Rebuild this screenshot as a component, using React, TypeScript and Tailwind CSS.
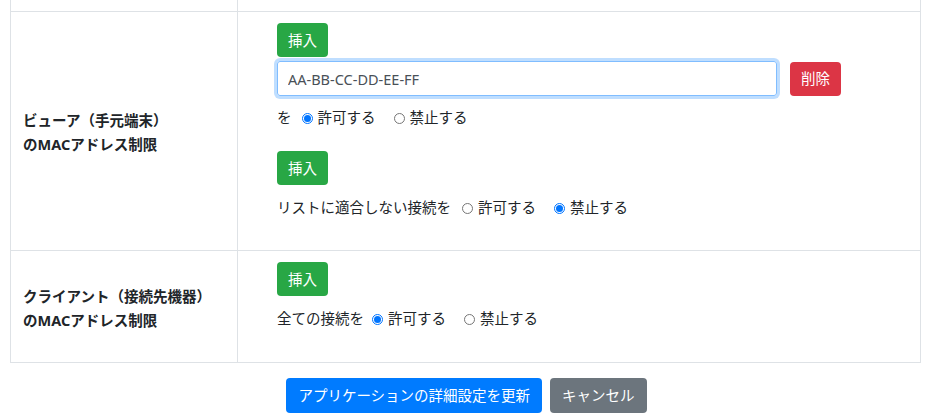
import React from "react";

const font = { fontFamily: '"Noto Sans", "Noto Sans CJK JP", sans-serif' };

const Btn = ({ color, children, big }: { color: string; children: React.ReactNode; big?: boolean }) => (
  <button
    className={`${color} text-white rounded-[4px] leading-none text-[14.5px] ${big ? "h-[35px] px-[12px]" : "h-[34px] px-[11px]"}`}
  >
    {children}
  </button>
);

const Radio = ({ checked, label }: { checked?: boolean; label: string }) => (
  <label className="flex items-center gap-[5px]">
    {checked ? (
      <span className="w-[11px] h-[11px] rounded-full border border-[#0075ff] bg-white flex items-center justify-center">
        <span className="w-[7px] h-[7px] rounded-full bg-[#0075ff]" />
      </span>
    ) : (
      <span className="w-[11px] h-[11px] rounded-full border border-[#767676] bg-white" />
    )}
    <span>{label}</span>
  </label>
);

const App = () => {
  return (
    <div className="w-[927px] h-[416px] bg-white text-[14.5px] text-[#212529] overflow-hidden" style={font}>
      <div className="mx-[10px] w-[911px]">
        <div className="flex h-[11px] border-x border-[#dee2e6]">
          <div className="w-[227px] border-r border-[#dee2e6]" />
        </div>

        {/* viewer row */}
        <div className="flex border border-[#dee2e6] h-[240px]">
          <div className="w-[227px] border-r border-[#dee2e6] flex items-center pl-[12px] pt-[1px] font-bold leading-[24px]">
            <div>
              ビューア（手元端末）
              <br />
              のMACアドレス制限
            </div>
          </div>
          <div className="flex-1 pl-[39px] pt-[11px]">
            <Btn color="bg-[#28a745]">挿入</Btn>
            <div className="flex items-center mt-[4px]">
              <input
                readOnly
                value="AA-BB-CC-DD-EE-FF"
                className="w-[500px] h-[35px] border border-[#80bdff] rounded-[3px] px-[10px] text-[#495057] text-[14.5px] shadow-[0_0_0_3px_rgba(0,123,255,0.25)] outline-none"
                style={font}
              />
              <div className="ml-[13px]">
                <Btn color="bg-[#dc3545]">削除</Btn>
              </div>
            </div>
            <div className="flex items-center mt-[11px] h-[22px]">
              <span className="mr-[10px]">を</span>
              <Radio checked label="許可する" />
              <div className="ml-[18px]">
                <Radio label="禁止する" />
              </div>
            </div>
            <div className="mt-[22px]">
              <Btn color="bg-[#28a745]">挿入</Btn>
            </div>
            <div className="flex items-center mt-[12px] h-[22px]">
              <span className="mr-[11px]">リストに適合しない接続を</span>
              <Radio label="許可する" />
              <div className="ml-[18px]">
                <Radio checked label="禁止する" />
              </div>
            </div>
          </div>
        </div>

        {/* client row */}
        <div className="flex border-x border-b border-[#dee2e6] h-[112px]">
          <div className="w-[227px] border-r border-[#dee2e6] flex items-center pl-[12px] pt-[2px] font-bold leading-[24px]">
            <div>
              クライアント（接続先機器）
              <br />
              のMACアドレス制限
            </div>
          </div>
          <div className="flex-1 pl-[39px] pt-[11px]">
            <Btn color="bg-[#28a745]">挿入</Btn>
            <div className="flex items-center mt-[12px] h-[22px]">
              <span className="mr-[8px]">全ての接続を</span>
              <Radio checked label="許可する" />
              <div className="ml-[18px]">
                <Radio label="禁止する" />
              </div>
            </div>
          </div>
        </div>

        <div className="flex justify-center gap-[8px] mt-[15px] pl-[2px]">
          <Btn big color="bg-[#007bff]">アプリケーションの詳細設定を更新</Btn>
          <Btn big color="bg-[#6c757d]">キャンセル</Btn>
        </div>
      </div>
    </div>
  );
};

export default App;
